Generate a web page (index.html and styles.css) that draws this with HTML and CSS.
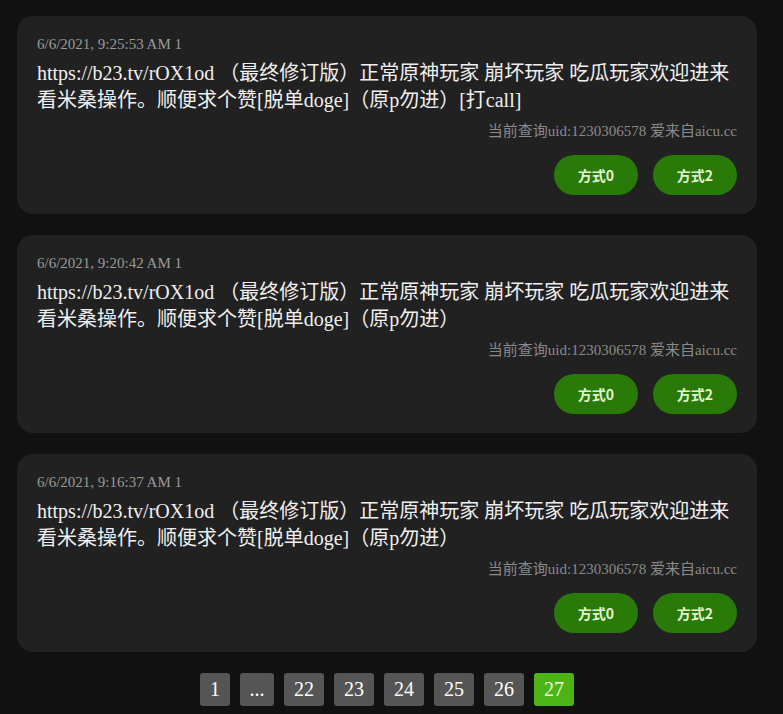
FILE: index.html
```html
<!DOCTYPE html>
<html lang="zh-CN">
<head>
<meta charset="utf-8">
<title>评论列表</title>
<link rel="stylesheet" href="styles.css">
</head>
<body>
<div class="wrap">
  <div class="card">
    <div class="date">6/6/2021, 9:25:53 AM 1</div>
    <div class="content">https://b23.tv/rOX1od （最终修订版）正常原神玩家 崩坏玩家 吃瓜玩家欢迎进来看米桑操作。顺便求个赞[脱单doge]（原p勿进）[打call]</div>
    <div class="uid">当前查询uid:1230306578 爱来自aicu.cc</div>
    <div class="actions"><button class="btn">方式0</button><button class="btn">方式2</button></div>
  </div>
  <div class="card">
    <div class="date">6/6/2021, 9:20:42 AM 1</div>
    <div class="content">https://b23.tv/rOX1od （最终修订版）正常原神玩家 崩坏玩家 吃瓜玩家欢迎进来看米桑操作。顺便求个赞[脱单doge]（原p勿进）</div>
    <div class="uid">当前查询uid:1230306578 爱来自aicu.cc</div>
    <div class="actions"><button class="btn">方式0</button><button class="btn">方式2</button></div>
  </div>
  <div class="card">
    <div class="date">6/6/2021, 9:16:37 AM 1</div>
    <div class="content">https://b23.tv/rOX1od （最终修订版）正常原神玩家 崩坏玩家 吃瓜玩家欢迎进来看米桑操作。顺便求个赞[脱单doge]（原p勿进）</div>
    <div class="uid">当前查询uid:1230306578 爱来自aicu.cc</div>
    <div class="actions"><button class="btn">方式0</button><button class="btn">方式2</button></div>
  </div>
  <div class="pager">
    <span class="page p1">1</span>
    <span class="page pdots">...</span>
    <span class="page">22</span>
    <span class="page">23</span>
    <span class="page">24</span>
    <span class="page">25</span>
    <span class="page">26</span>
    <span class="page active">27</span>
  </div>
</div>
</body>
</html>
```
FILE: styles.css
```css
html, body {
  margin: 0;
  padding: 0;
  background: #111111;
}
body {
  font-family: "Liberation Serif", "Noto Sans CJK SC", serif;
  color: #eeeeee;
}
.wrap {
  width: 740px;
  margin-left: 17px;
  padding-top: 16px;
  display: flex;
  flex-direction: column;
  gap: 21px;
}
.card {
  background: #212121;
  border-radius: 16px;
  padding: 19px 20px 19px 20px;
  height: 198px;
  box-sizing: border-box;
  display: flex;
  flex-direction: column;
}
.date {
  font-size: 15px;
  line-height: 18px;
  color: #9a9a9a;
}
.content {
  font-size: 20px;
  line-height: 27px;
  color: #f0f0f0;
  margin-top: 7px;
}
.uid {
  font-size: 15px;
  line-height: 18px;
  color: #8a8a8a;
  text-align: right;
  margin-top: auto;
}
.actions {
  display: flex;
  justify-content: flex-end;
  gap: 15px;
  margin-top: 15px;
}
.btn {
  width: 84px;
  height: 40px;
  border: none;
  border-radius: 20px;
  background: #297a09;
  color: #e2f5cf;
  font-family: "Noto Sans CJK SC", "Noto Sans", sans-serif;
  font-weight: 700;
  font-size: 14px;
  padding: 0;
}
.pager {
  display: flex;
  justify-content: center;
  gap: 10px;
}
.page {
  width: 40px;
  height: 33px;
  border-radius: 3px;
  background: #555555;
  color: #ffffff;
  font-size: 20px;
  display: flex;
  align-items: center;
  justify-content: center;
}
.p1 { width: 30px; }
.pdots { width: 34px; }
.page.active {
  background: #4cb515;
  color: #eefbe3;
}
```
